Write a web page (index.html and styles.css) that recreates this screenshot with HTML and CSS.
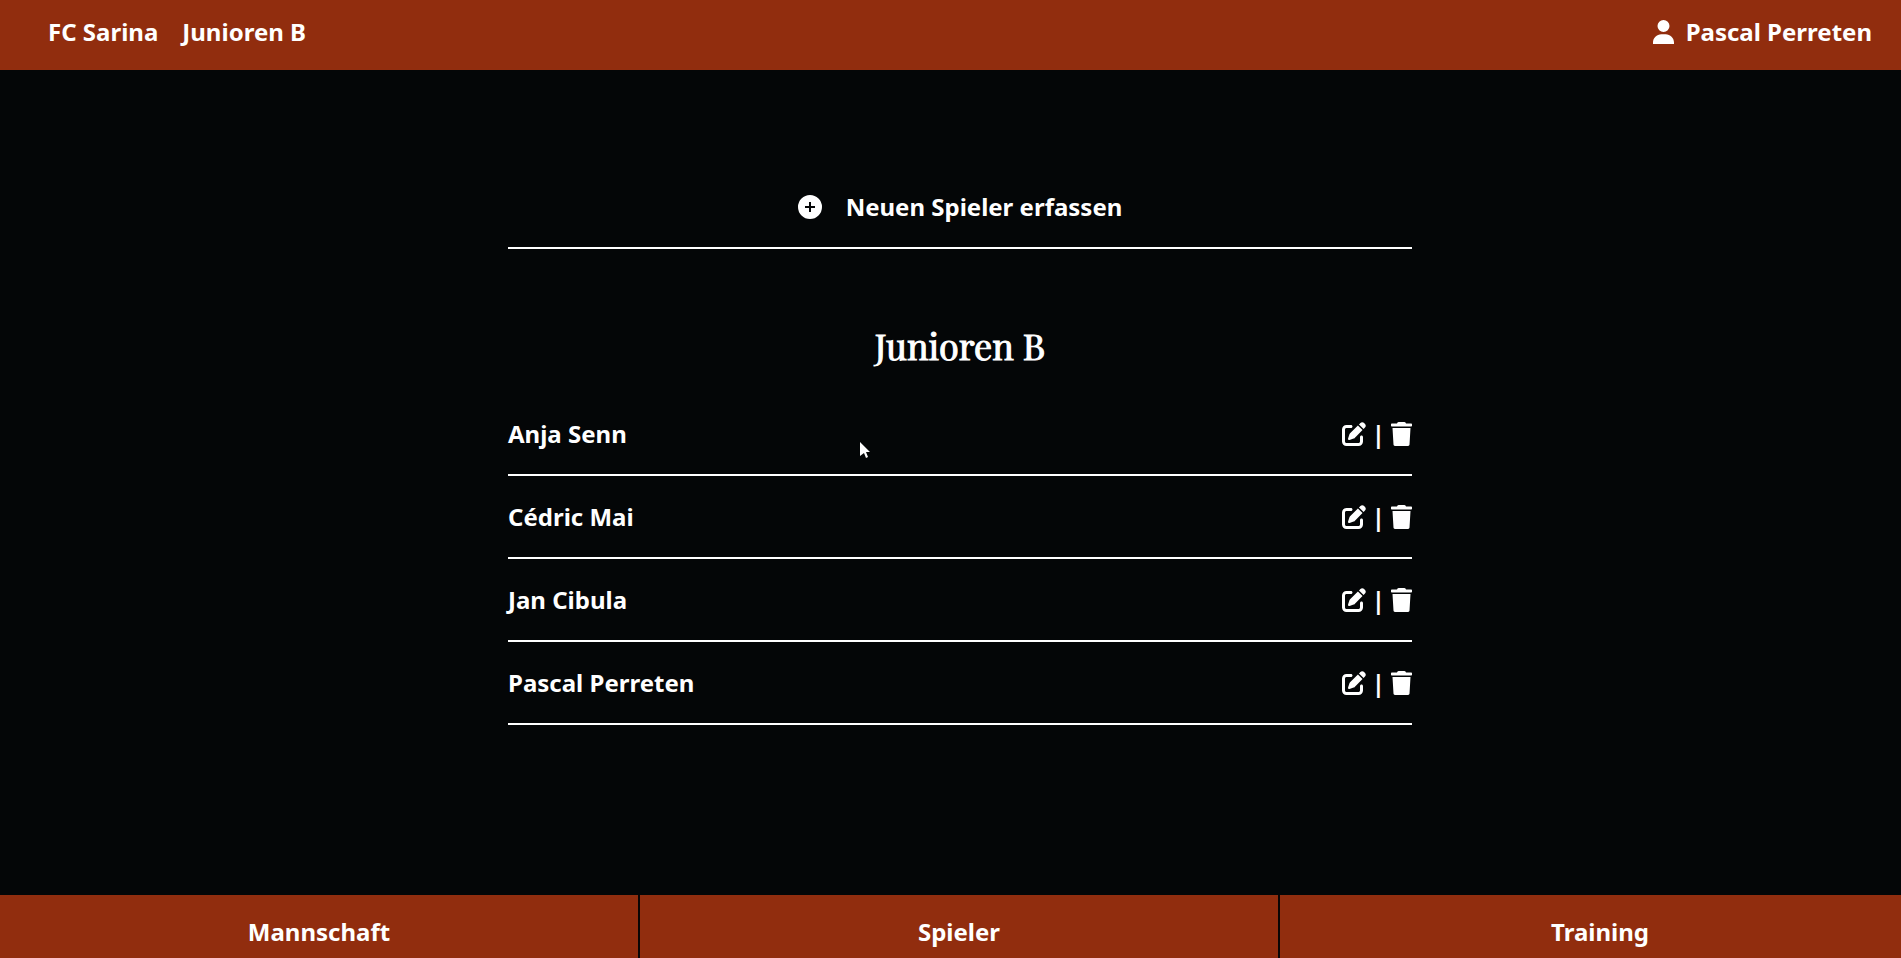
FILE: index.html
```html
<!DOCTYPE html>
<html lang="de">
  <head>
    <meta charset="UTF-8" />
    <title>FC Sarina - Spieler</title>
    <link rel="stylesheet" href="styles.css">
  </head>
  <body>
    <!-- Icons -->
    <svg class="sprite" aria-hidden="true">
      <symbol id="icon-user" viewBox="0 0 448 512">
        <path d="M224 256A128 128 0 1 0 224 0a128 128 0 1 0 0 256zM178 304C80 304 0 384 0 482V512H448V482C448 384 368 304 270 304H178z" />
      </symbol>
      <symbol id="icon-plus" viewBox="0 0 24 24">
        <path fill-rule="evenodd" d="M12 0a12 12 0 1 0 0 24a12 12 0 1 0 0-24zM11 7h2v4h4v2h-4v4h-2v-4H7v-2h4z" />
      </symbol>
      <symbol id="icon-edit" viewBox="0 0 512 512">
        <path d="M471.6 21.7c-21.9-21.9-57.3-21.9-79.2 0L362.3 51.7l97.9 97.9 30.1-30.1c21.9-21.9 21.9-57.3 0-79.2L471.6 21.7zm-299.2 220c-6.1 6.1-10.8 13.6-13.5 21.9l-29.6 88.8c-2.9 8.6-.6 18.1 5.8 24.6s15.9 8.7 24.6 5.8l88.8-29.6c8.2-2.7 15.7-7.4 21.9-13.5L437.7 172.3 339.7 74.3 172.4 241.7zM96 64C43 64 0 107 0 160V416c0 53 43 96 96 96H352c53 0 96-43 96-96V320c0-17.7-14.3-32-32-32s-32 14.3-32 32v96c0 17.7-14.3 32-32 32H96c-17.7 0-32-14.3-32-32V160c0-17.7 14.3-32 32-32h96c17.7 0 32-14.3 32-32s-14.3-32-32-32H96z" />
      </symbol>
      <symbol id="icon-trash" viewBox="0 0 448 512">
        <path d="M135 18L128 32H16C6 32 0 38 0 48V80C0 90 6 96 16 96H432c10 0 16-6 16-16V48c0-10-6-16-16-16H320l-7-14C307 7 296 0 284 0H164c-12 0-23 7-29 18zM416 128H32L53 482c1 17 14 30 31 30H364c17 0 30-13 31-30L416 128z" />
      </symbol>
    </svg>

    <div class="page">
      <header class="header">
        <nav class="header-nav">
          <a href="#">FC Sarina</a>
          <a href="#">Junioren B</a>
        </nav>
        <a class="user" href="#">
          <svg class="icon-narrow"><use href="#icon-user" /></svg>
          Pascal Perreten
        </a>
      </header>

      <main class="content">
        <a class="row new-player" href="#">
          <svg class="icon"><use href="#icon-plus" /></svg>
          Neuen Spieler erfassen
        </a>

        <h1>Junioren B</h1>

        <ul class="players">
          <li class="row">
            <span>Anja Senn</span>
            <div class="actions">
              <button aria-label="Anja Senn bearbeiten"><svg class="icon"><use href="#icon-edit" /></svg></button>
              <span>|</span>
              <button aria-label="Anja Senn löschen"><svg class="icon-narrow"><use href="#icon-trash" /></svg></button>
            </div>
          </li>
          <li class="row">
            <span>Cédric Mai</span>
            <div class="actions">
              <button aria-label="Cédric Mai bearbeiten"><svg class="icon"><use href="#icon-edit" /></svg></button>
              <span>|</span>
              <button aria-label="Cédric Mai löschen"><svg class="icon-narrow"><use href="#icon-trash" /></svg></button>
            </div>
          </li>
          <li class="row">
            <span>Jan Cibula</span>
            <div class="actions">
              <button aria-label="Jan Cibula bearbeiten"><svg class="icon"><use href="#icon-edit" /></svg></button>
              <span>|</span>
              <button aria-label="Jan Cibula löschen"><svg class="icon-narrow"><use href="#icon-trash" /></svg></button>
            </div>
          </li>
          <li class="row">
            <span>Pascal Perreten</span>
            <div class="actions">
              <button aria-label="Pascal Perreten bearbeiten"><svg class="icon"><use href="#icon-edit" /></svg></button>
              <span>|</span>
              <button aria-label="Pascal Perreten löschen"><svg class="icon-narrow"><use href="#icon-trash" /></svg></button>
            </div>
          </li>
        </ul>
      </main>

      <nav class="footer">
        <a href="#">Mannschaft</a>
        <a href="#">Spieler</a>
        <a href="#">Training</a>
      </nav>
    </div>

    <svg class="cursor" viewBox="0 0 10 16" aria-hidden="true">
      <path d="M0 0L10 10H6L8 15L6 16L4 11L0 14z" />
    </svg>
  </body>
</html>
```
FILE: styles.css
```css
* {
  box-sizing: border-box;
}

body {
  margin: 0;
  overflow: hidden;
  background: #040607;
  color: #ffffff;
  font-family: "Noto Sans", sans-serif;
  font-size: 24px;
  font-weight: 700;
  line-height: 33px;
}

a {
  color: inherit;
  text-decoration: none;
}

svg {
  display: block;
  fill: currentColor;
}

.sprite {
  display: none;
}

.icon {
  width: 24px;
  height: 24px;
}

.icon-narrow {
  width: 21px;
  height: 24px;
}

.page {
  display: flex;
  flex-direction: column;
  width: calc(100% + 19px);
  min-height: 100vh;
}

.header {
  display: flex;
  justify-content: space-between;
  padding: 15px 48px 22px;
  background: #912d0e;
}

.header-nav {
  display: flex;
  gap: 24px;
}

.user {
  display: flex;
  align-items: center;
  gap: 12px;
}

.content {
  flex: 1;
  width: 100%;
  max-width: 904px;
  margin: 0 auto;
  padding: 96px 0;
}

.row {
  display: flex;
  align-items: center;
  justify-content: space-between;
  padding: 24px 0;
  border-bottom: 2px solid #ffffff;
}

.new-player {
  justify-content: center;
  gap: 24px;
}

h1 {
  margin: 72px 0 24px;
  font-family: "Playfair Display", "Liberation Serif", serif;
  font-size: 36px;
  font-weight: 400;
  line-height: 48px;
  text-align: center;
  -webkit-text-stroke: 1px #ffffff;
}

.players {
  margin: 0;
  padding: 0;
  list-style: none;
}

.actions {
  display: flex;
  align-items: center;
  gap: 6px;
}

button {
  padding: 0;
  border: none;
  background: none;
  color: inherit;
  cursor: pointer;
}

.footer {
  display: grid;
  grid-template-columns: repeat(3, 1fr);
}

.footer a {
  padding: 20px 0 10px;
  border-right: 2px solid #0a0505;
  background: #912d0e;
  text-align: center;
}

.footer a:last-child {
  border-right: none;
}

.cursor {
  position: absolute;
  top: 442px;
  left: 860px;
  width: 10px;
  height: 16px;
}
```
